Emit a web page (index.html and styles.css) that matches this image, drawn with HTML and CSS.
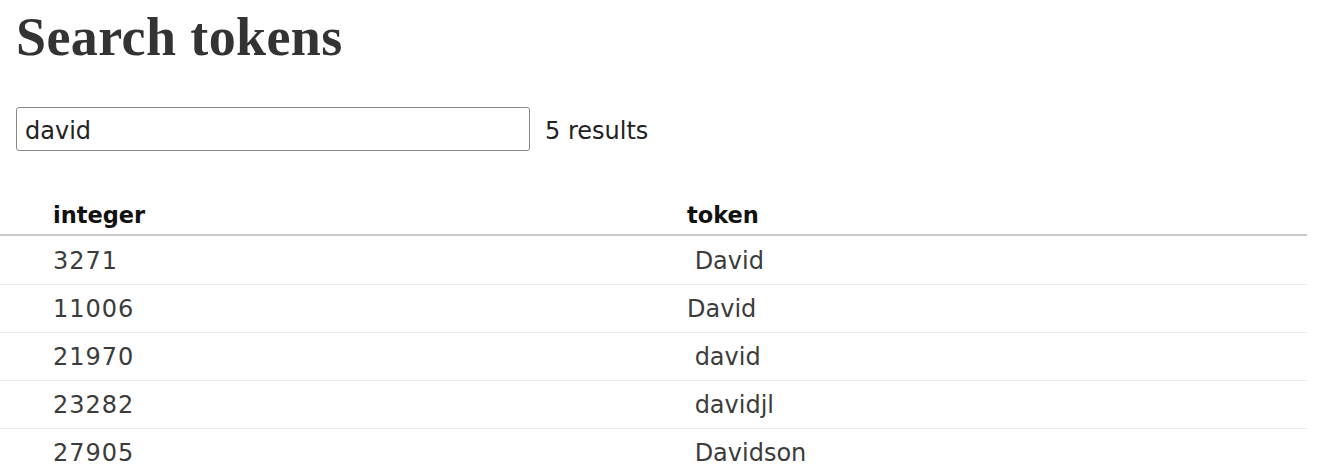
FILE: index.html
```html
<!DOCTYPE html>
<html>
<head>
<meta charset="utf-8">
<link rel="stylesheet" href="styles.css">
</head>
<body>
<div class="page">
  <h1 class="title">Search tokens</h1>
  <div class="search">
    <input class="search-input" type="text" value="david">
    <span class="count">5 results</span>
  </div>
</div>
<div class="table">
  <div class="row head"><div class="cell">integer</div><div class="cell">token</div></div>
  <div class="row"><div class="cell num">3271</div><div class="cell"> David</div></div>
  <div class="row"><div class="cell num">11006</div><div class="cell">David</div></div>
  <div class="row"><div class="cell num">21970</div><div class="cell"> david</div></div>
  <div class="row"><div class="cell num">23282</div><div class="cell"> davidjl</div></div>
  <div class="row"><div class="cell num">27905</div><div class="cell"> Davidson</div></div>
</div>
</body>
</html>
```
FILE: styles.css
```css
html, body {
  margin: 0;
  padding: 0;
  background: #fff;
}
body {
  font-family: "DejaVu Sans", sans-serif;
  font-size: 24px;
  color: #3c3c3c;
}
.page {
  padding: 7px 16px 0;
}
.title {
  margin: 0;
  font-family: "Liberation Serif", serif;
  font-weight: bold;
  font-size: 54px;
  line-height: 60px;
  letter-spacing: 0.4px;
  color: #333;
}
.search {
  margin-top: 40px;
  display: flex;
  align-items: center;
  gap: 15px;
}
.search-input {
  box-sizing: border-box;
  width: 514px;
  height: 44px;
  margin: 0;
  padding: 3px 8px 0;
  border: 1px solid #8a8a8a;
  border-radius: 3px;
  font-family: "DejaVu Sans", sans-serif;
  font-size: 24px;
  color: #222;
  outline: none;
}
.count {
  color: #222;
  padding-top: 4px;
}
.table {
  margin-top: 35px;
  width: 1307px;
}
.row {
  display: grid;
  grid-template-columns: 634px 1fr;
  padding-left: 53px;
  height: 47px;
  align-items: center;
  border-top: 1px solid #ebebeb;
}
.row.head {
  border-top: none;
  border-bottom: 2px solid #c8c8c8;
  height: 48px;
  align-items: end;
  font-weight: bold;
  color: #111;
}
.row.head .cell {
  padding-bottom: 6px;
  font-size: 22.5px;
}
.row.head + .row {
  border-top: none;
  height: 48px;
}
.cell {
  white-space: pre;
  padding-top: 1px;
}
.cell.num {
  letter-spacing: 1px;
}
```
